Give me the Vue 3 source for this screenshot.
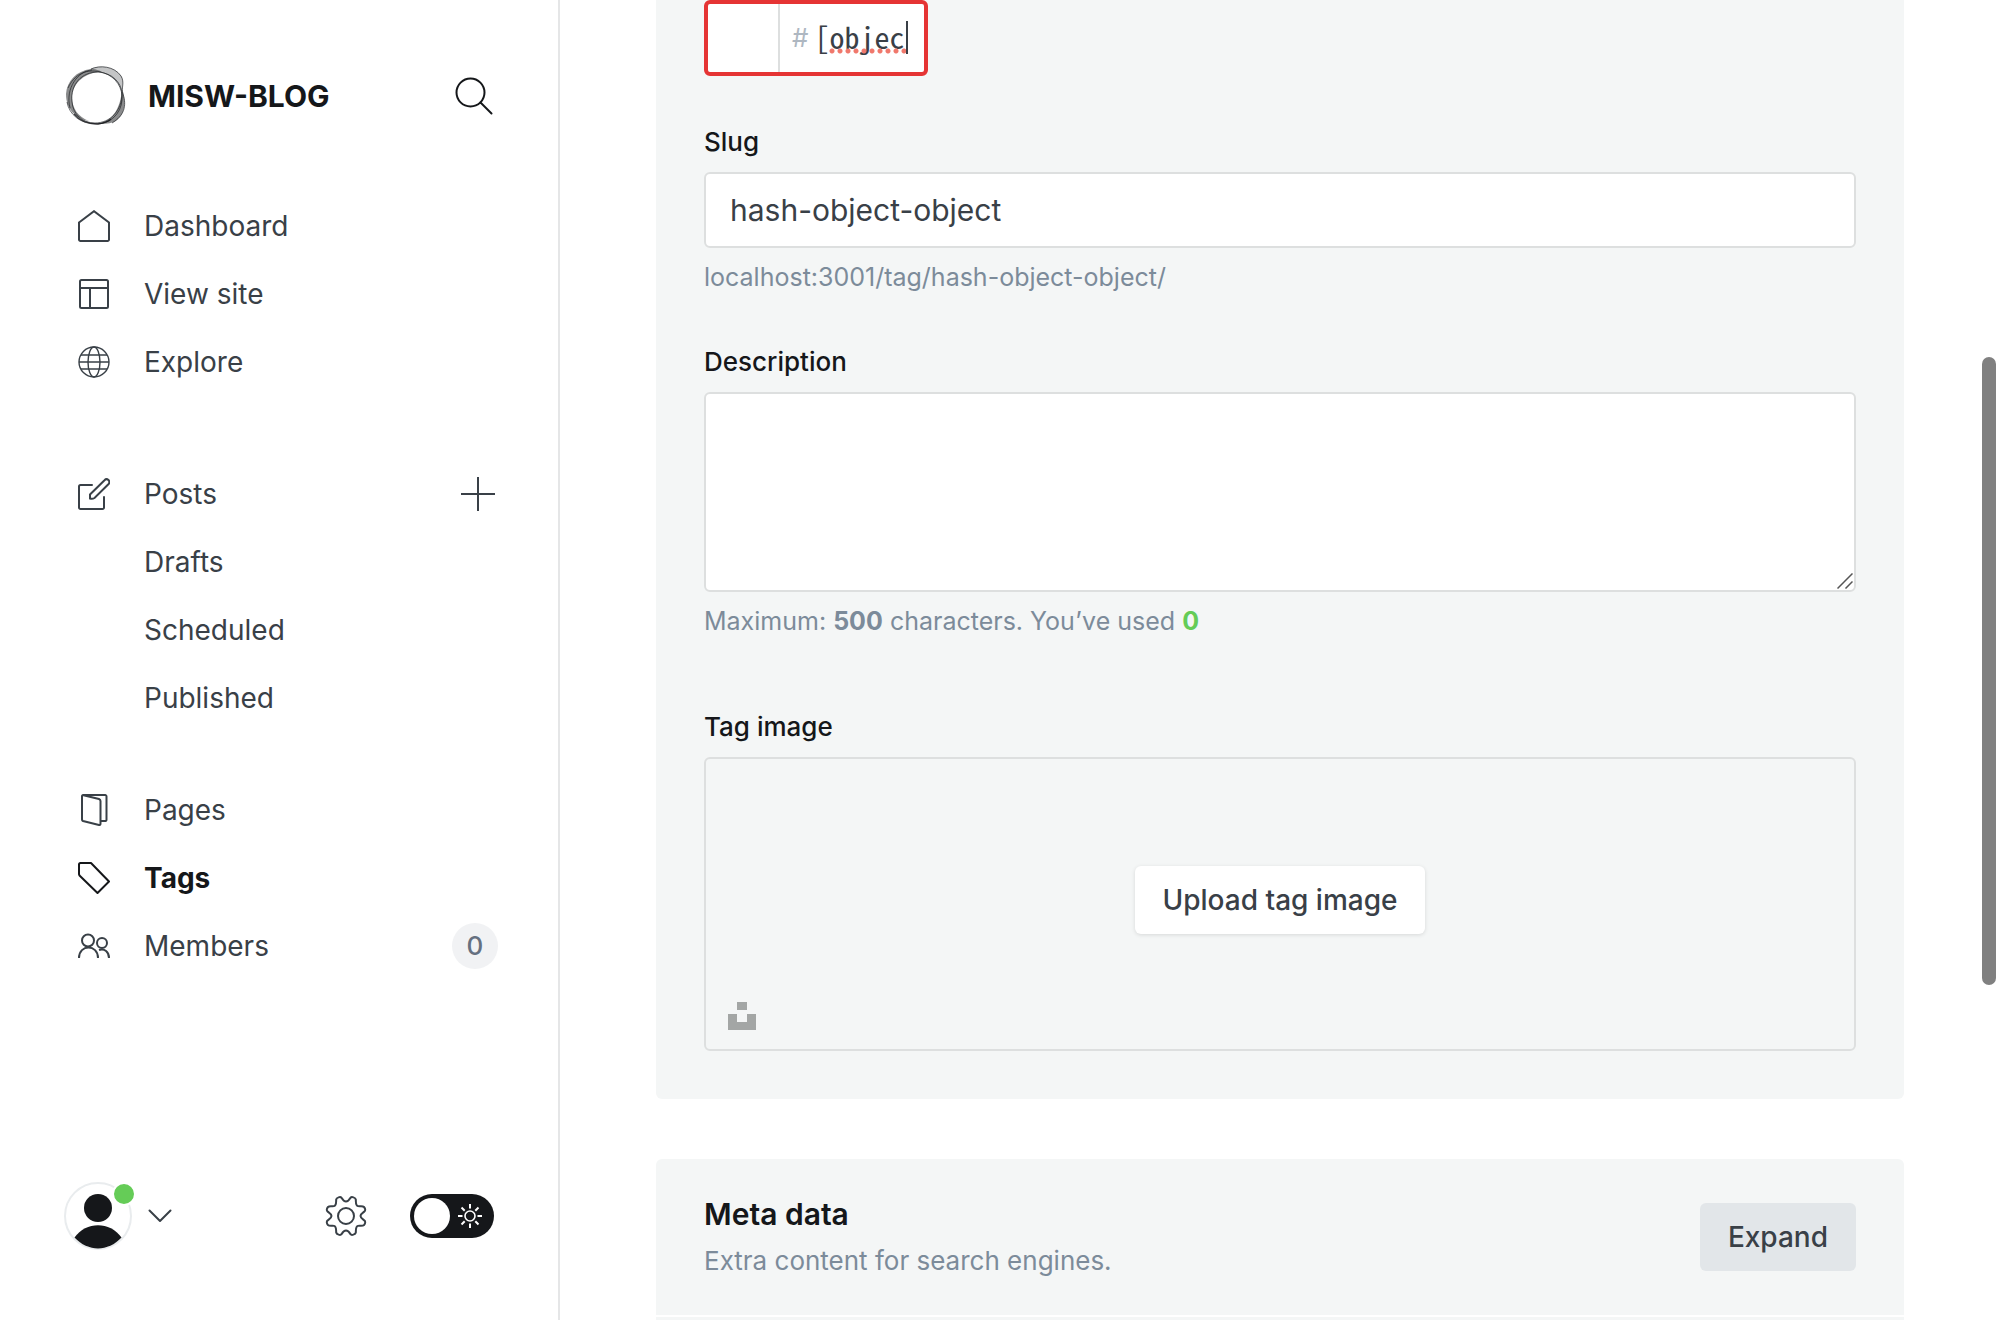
<script setup>
import { ref } from 'vue'

const slug = ref('hash-object-object')
const description = ref('')
const accent = ref('[objec')
const night = ref(false)
const rayAngles = [0, 45, 90, 135, 180, 225, 270, 315]
</script>

<template>
  <div class="app">
    <aside class="sidebar">
      <header class="brand">
        <svg class="logo" viewBox="0 0 64 64" aria-hidden="true">
          <g fill="#15171a" fill-rule="evenodd">
            <path fill-opacity=".5" d="M2 30C3 17 12 7 27 5C33 5 36 7 38 8C22 8 9 18 8 33C8 44 14 53 25 57C12 55 2 45 2 30Z" />
            <path fill-opacity=".25" d="M26 5C34 0 52 2 58 13C60 18 58 22 58 27C54 15 44 8 26 5Z" />
            <path fill-opacity=".5" d="M58 26C63 38 61 52 50 58C44 60 38 60 32 60C48 58 56 46 58 26Z" />
          </g>
          <g fill="none" stroke="#15171a" stroke-opacity=".8" stroke-width=".8">
            <path d="M27 5C36 1 50 2 57 12C61 19 57 23 59 30C63 42 60 52 48 59" />
            <path d="M4 24C10 11 22 3 40 9C52 13 59 24 58 36C57 50 46 60 32 60C16 60 5 50 3 38" />
            <path d="M8 38C6 20 18 8 34 8C48 9 57 18 58 29C58 47 46 59 31 59C18 59 9 50 8 38Z" />
            <path d="M6 44C1 24 14 7 28 6" />
            <path stroke-width="1.4" d="M10 50C16 57 24 60 34 60C40 59 44 58 47 55" />
          </g>
        </svg>
        <span class="brand-name">MISW-BLOG</span>
        <button class="icon-button search" type="button" aria-label="Search">
          <svg width="38" height="38" viewBox="0 0 38 38" fill="none" stroke="#15171a" stroke-width="2">
            <circle cx="15.5" cy="15.5" r="14" /><path d="M25.5 25.5L36.5 36.5" stroke-linecap="round" />
          </svg>
        </button>
      </header>

      <nav class="nav">
        <ul>
          <li><a href="#dashboard">
            <svg class="icon" viewBox="0 0 32 32"><path d="M1 12.5L16 1.2L31 12.5V29.5A1.5 1.5 0 0 1 29.5 31H2.5A1.5 1.5 0 0 1 1 29.5Z" /></svg>
            Dashboard</a></li>
          <li><a href="#site">
            <svg class="icon" viewBox="0 0 32 32"><rect x="2" y="2" width="28" height="28" rx="1.5" /><path d="M2 10H30M12 10V30" /></svg>
            View site</a></li>
          <li><a href="#explore">
            <svg class="icon thin" viewBox="0 0 32 32"><circle cx="16" cy="16" r="15" /><ellipse cx="16" cy="16" rx="6" ry="15" /><path d="M1 16H31M3 9H29M3 23H29" /></svg>
            Explore</a></li>
        </ul>
        <ul class="posts">
          <li><a href="#posts">
            <svg class="icon" viewBox="0 0 32 32" stroke-linecap="round"><path d="M14 7H2.5A1.500 1.500 0 0 0 1 8.500V29.500A1.500 1.500 0 0 0 2.500 31H24.500A1.500 1.500 0 0 0 26 29.500V19" /><path d="M12 20.500V16.500L26.500 2.200A2.700 2.700 0 0 1 30.600 6L16.500 20Q14.500 21.200 12 20.500Z" /></svg>
            Posts</a>
            <button class="icon-button plus" type="button" aria-label="New post">
              <svg width="34" height="34" viewBox="0 0 34 34" stroke="#394047" stroke-width="2"><path d="M17 0V34M0 17H34" /></svg>
            </button>
          </li>
          <li class="sub"><a href="#drafts">Drafts</a></li>
          <li class="sub"><a href="#scheduled">Scheduled</a></li>
          <li class="sub"><a href="#published">Published</a></li>
        </ul>
        <ul class="content">
          <li><a href="#pages">
            <svg class="icon" viewBox="0 0 32 32" stroke-linejoin="round"><path d="M22 27H27A1.300 1.300 0 0 0 28.500 25.700V2.400A1.400 1.400 0 0 0 27 1H5" /><path d="M4 2.200Q4 .8 5.500 1.200L21 5Q22.500 5.600 22.500 7V29.500Q22.500 31.300 21 31L5 27Q4 26.500 4 25.500Z" /></svg>
            Pages</a></li>
          <li class="active"><a href="#tags" aria-current="page">
            <svg class="icon" viewBox="0 0 32 32" stroke-linejoin="round"><path d="M1 2.500A1.500 1.500 0 0 1 2.500 1H13L31 19.500L19.500 31L1.500 13.500Q1 12.800 1 12Z" /></svg>
            Tags</a></li>
          <li><a href="#members">
            <svg class="icon" viewBox="0 0 32 32"><circle cx="10" cy="10.500" r="6" /><circle cx="24" cy="13" r="5" /><path d="M1 28C1 14 20 14 20 28M21 20C26.500 18 31 22 31 28" /></svg>
            Members</a>
            <span class="badge">0</span>
          </li>
        </ul>
      </nav>

      <footer class="account">
        <button class="icon-button user" type="button" aria-label="Account menu">
          <span class="avatar">
            <svg width="68" height="68" viewBox="0 0 68 68">
              <circle cx="34" cy="34" r="33" fill="#fff" stroke="#e9ecee" stroke-width="2" />
              <circle cx="34" cy="26" r="14" fill="#15171a" />
              <path d="M10.500 55.500C22 39 46 39 57.500 55.500C44 70 24 70 10.500 55.500Z" fill="#15171a" />
            </svg>
            <span class="online"></span>
          </span>
          <svg width="24" height="14" viewBox="0 0 24 14" fill="none" stroke="#394047" stroke-width="2" stroke-linecap="round" stroke-linejoin="round"><path d="M1.500 1.500L12 12L22.500 1.500" /></svg>
        </button>
        <button class="icon-button settings" type="button" aria-label="Settings">
          <svg width="42" height="42" viewBox="-21 -21 42 42" fill="none" stroke="#394047" stroke-width="2">
            <circle r="8" />
            <path d="M0 -14.500C-2 -14.500 -3.500 -16.500 -4.500 -18.200C-5.500 -19.600 -9.500 -18.600 -9.800 -16.500C-10 -13.500 -9.500 -10.500 -12 -9.900C-14 -9.400 -16.500 -10.500 -18 -9C-19.300 -7.500 -19.800 -5.500 -18.300 -4.400C-16.500 -3 -14.500 -2 -14.500 0C-14.500 2 -16.500 3 -18.300 4.400C-19.800 5.500 -19.300 7.500 -18 9C-16.500 10.500 -14 9.400 -12 9.900C-9.500 10.500 -10 13.500 -9.800 16.500C-9.500 18.600 -5.500 19.600 -4.500 18.200C-3.500 16.500 -2 14.500 0 14.500C2 14.500 3.500 16.500 4.500 18.200C5.500 19.600 9.500 18.600 9.800 16.500C10 13.500 9.500 10.500 12 9.900C14 9.400 16.500 10.500 18 9C19.300 7.500 19.800 5.500 18.300 4.400C16.500 3 14.500 2 14.500 0C14.500 -2 16.500 -3 18.300 -4.400C19.800 -5.500 19.300 -7.500 18 -9C16.500 -10.500 14 -9.400 12 -9.900C9.500 -10.500 10 -13.500 9.800 -16.500C9.500 -18.600 5.500 -19.600 4.500 -18.200C3.500 -16.500 2 -14.500 0 -14.500Z" />
          </svg>
        </button>
        <label class="toggle">
          <input v-model="night" type="checkbox" aria-label="Night shift" />
          <span class="knob"></span>
          <svg width="24" height="24" viewBox="-12 -12 24 24" fill="none" stroke="#fff" stroke-width="2">
            <circle r="5" stroke-width="1.600" />
            <path v-for="a in rayAngles" :key="a" d="M0 -7.500V-12" :transform="`rotate(${a})`" />
          </svg>
        </label>
      </footer>
    </aside>

    <main class="main">
      <section class="panel form">
        <div class="color-field">
          <span class="swatch"></span>
          <span class="hash">#</span>
          <span class="code">
            <input v-model="accent" type="text" aria-label="Accent color" />
            <span class="squiggle"></span>
            <span class="caret"></span>
          </span>
        </div>

        <div class="group slug">
          <label for="slug">Slug</label>
          <input id="slug" v-model="slug" class="control" type="text" />
          <p class="hint">localhost:3001/tag/{{ slug }}/</p>
        </div>

        <div class="group description">
          <label for="description">Description</label>
          <div class="area">
            <textarea id="description" v-model="description" class="control"></textarea>
            <svg class="grip" width="16" height="16" viewBox="0 0 16 16" stroke="#555" stroke-width="1.500"><path d="M.5 15.500L15.500 .5M8.500 15.500L15.500 8.500" /></svg>
          </div>
          <p class="hint">Maximum: <b>500</b> characters. You’ve used <b class="ok">{{ description.length }}</b></p>
        </div>

        <div class="group image">
          <label for="upload">Tag image</label>
          <div class="dropzone">
            <button id="upload" class="button white" type="button">Upload tag image</button>
            <a class="unsplash" href="#unsplash" aria-label="Unsplash">
              <svg width="28" height="28" viewBox="0 0 28 28" fill="#a3a6a5"><path d="M9 0H19V8H9ZM0 12H9V20H19V12H28V28H0Z" /></svg>
            </a>
          </div>
        </div>
      </section>

      <section class="panel meta">
        <div class="meta-head">
          <div class="meta-text">
            <h2>Meta data</h2>
            <p>Extra content for search engines.</p>
          </div>
          <button class="button grey" type="button">Expand</button>
        </div>
        <div class="meta-body"></div>
      </section>
    </main>
    <span class="scroll-thumb"></span>
  </div>
</template>

<style>
body {
  margin: 0;
  background: #fff;
}
</style>

<style scoped>
.app {
  position: relative;
  display: flex;
  height: 100vh;
  overflow: hidden;
  background: #fff;
  color: #394047;
  font-family: Inter, "Liberation Sans", sans-serif;
  font-size: 26px;
  line-height: 32px;
}

* {
  box-sizing: border-box;
}

button,
input,
textarea {
  font: inherit;
  color: inherit;
}

ul,
p,
h2 {
  margin: 0;
  padding: 0;
  list-style: none;
}

svg {
  display: block;
  flex: none;
}

.sidebar {
  display: flex;
  flex: none;
  flex-direction: column;
  width: 560px;
  padding: 64px 62px 70px 64px;
  border-right: 2px solid #e5e6e7;
}

.brand {
  display: flex;
  align-items: center;
  height: 64px;
}

.logo {
  width: 64px;
  height: 64px;
}

.brand-name {
  margin-left: 20px;
  color: #15171a;
  font-size: 30px;
  font-weight: 700;
}

.icon-button {
  display: flex;
  align-items: center;
  padding: 0;
  border: 0;
  background: none;
}

.search {
  margin: 0 3px 0 auto;
}

.nav {
  margin-top: 64px;
  font-size: 28px;
}

.nav li {
  display: flex;
  align-items: center;
  justify-content: space-between;
  height: 68px;
}

.nav a {
  display: flex;
  align-items: center;
  gap: 34px;
  padding-left: 14px;
  color: #394047;
  text-decoration: none;
}

.nav .sub a {
  padding-left: 80px;
}

.nav .active a {
  color: #15171a;
  font-weight: 700;
}

.posts {
  margin-top: 64px;
}

.content {
  margin-top: 44px;
}

.icon {
  width: 32px;
  height: 32px;
  fill: none;
  stroke: currentColor;
  stroke-width: 2;
}

.icon.thin {
  stroke-width: 1.4;
}

.plus {
  margin-right: 1px;
}

.badge {
  width: 46px;
  height: 46px;
  margin-right: -2px;
  border-radius: 23px;
  background: #f1f2f4;
  color: #657080;
  font-size: 26px;
  font-weight: 500;
  line-height: 46px;
  text-align: center;
}

.account {
  display: flex;
  align-items: center;
  margin-top: auto;
}

.user {
  gap: 16px;
}

.avatar {
  position: relative;
}

.online {
  position: absolute;
  top: 0;
  right: -4px;
  width: 24px;
  height: 24px;
  border: 2px solid #fff;
  border-radius: 50%;
  background: #65cc57;
}

.settings {
  margin-left: auto;
}

.toggle {
  display: flex;
  align-items: center;
  justify-content: space-between;
  width: 84px;
  height: 44px;
  margin: 0 2px 0 43px;
  padding: 0 12px 0 4px;
  border-radius: 22px;
  background: #15171a;
}

.toggle input {
  position: absolute;
  opacity: 0;
}

.knob {
  width: 36px;
  height: 36px;
  border-radius: 50%;
  background: #fff;
}

.main {
  flex: 1;
  min-width: 0;
  padding: 0 96px;
  overflow: hidden;
}

.panel {
  background: #f4f6f6;
}

.form {
  padding: 0 48px 48px;
  border-radius: 0 0 6px 6px;
}

.color-field {
  display: flex;
  align-items: center;
  width: 224px;
  height: 76px;
  border: 4px solid #e53434;
  border-radius: 6px;
  background: #fff;
}

.swatch {
  align-self: stretch;
  width: 72px;
  border-right: 2px solid #dddfdf;
}

.hash {
  margin-left: 12px;
  color: #aeb7c1;
}

.code {
  position: relative;
  flex: 1;
  margin-left: 6px;
}

.code input {
  display: block;
  width: 100%;
  height: 44px;
  padding: 0 0 4px;
  border: 0;
  outline: 0;
  background: none;
  font-family: "Noto Sans Mono CJK JP", "Noto Sans CJK JP", monospace;
  font-size: 30px;
}

.squiggle {
  position: absolute;
  top: 32px;
  left: 14px;
  width: 80px;
  height: 6px;
  background: radial-gradient(circle, #f0786c 2px, transparent 3px) 0 0 / 8px 6px;
}

.caret {
  position: absolute;
  top: 5px;
  left: 92px;
  width: 2px;
  height: 33px;
  background: #394047;
}

.group label {
  display: block;
  margin-bottom: 14px;
  color: #15171a;
  font-weight: 500;
}

.slug {
  margin-top: 50px;
}

.description {
  margin-top: 53px;
}

.image {
  margin-top: 74px;
}

.control {
  display: block;
  width: 100%;
  padding: 0 24px;
  border: 2px solid #dddfdf;
  border-radius: 6px;
  outline: 0;
  background: #fff;
  font-size: 30px;
}

input.control {
  height: 76px;
}

textarea.control {
  height: 200px;
  resize: none;
}

.area {
  position: relative;
}

.grip {
  position: absolute;
  right: 3px;
  bottom: 3px;
}

.hint {
  margin-top: 13px;
  color: #7c8b9a;
  font-size: 25px;
}

.hint .ok {
  color: #65cc57;
}

.dropzone {
  position: relative;
  display: flex;
  align-items: center;
  justify-content: center;
  height: 294px;
  border: 2px solid #dddfdf;
  border-radius: 6px;
  padding-bottom: 8px;
}

.unsplash {
  position: absolute;
  bottom: 19px;
  left: 22px;
}

.button {
  height: 68px;
  padding: 0 28px;
  border: 0;
  border-radius: 6px;
  font-size: 28px;
  font-weight: 500;
}

.white {
  background: #fff;
  box-shadow: 0 1px 4px rgba(0, 0, 0, 0.12);
}

.grey {
  background: #e2e6e9;
}

.meta {
  margin-top: 60px;
  border-radius: 6px;
}

.meta-head {
  display: flex;
  align-items: center;
  justify-content: space-between;
  height: 156px;
  padding: 0 48px;
}

.meta-text {
  padding-bottom: 2px;
}

.meta h2 {
  color: #15171a;
  font-size: 30px;
  font-weight: 600;
  line-height: 38px;
}

.meta p {
  margin-top: 12px;
  color: #7c8b9a;
}

.meta-body {
  height: 48px;
  border-top: 2px solid #fff;
}

.scroll-thumb {
  position: absolute;
  top: 357px;
  right: 4px;
  width: 14px;
  height: 628px;
  border-radius: 7px;
  background: #808080;
}
</style>
